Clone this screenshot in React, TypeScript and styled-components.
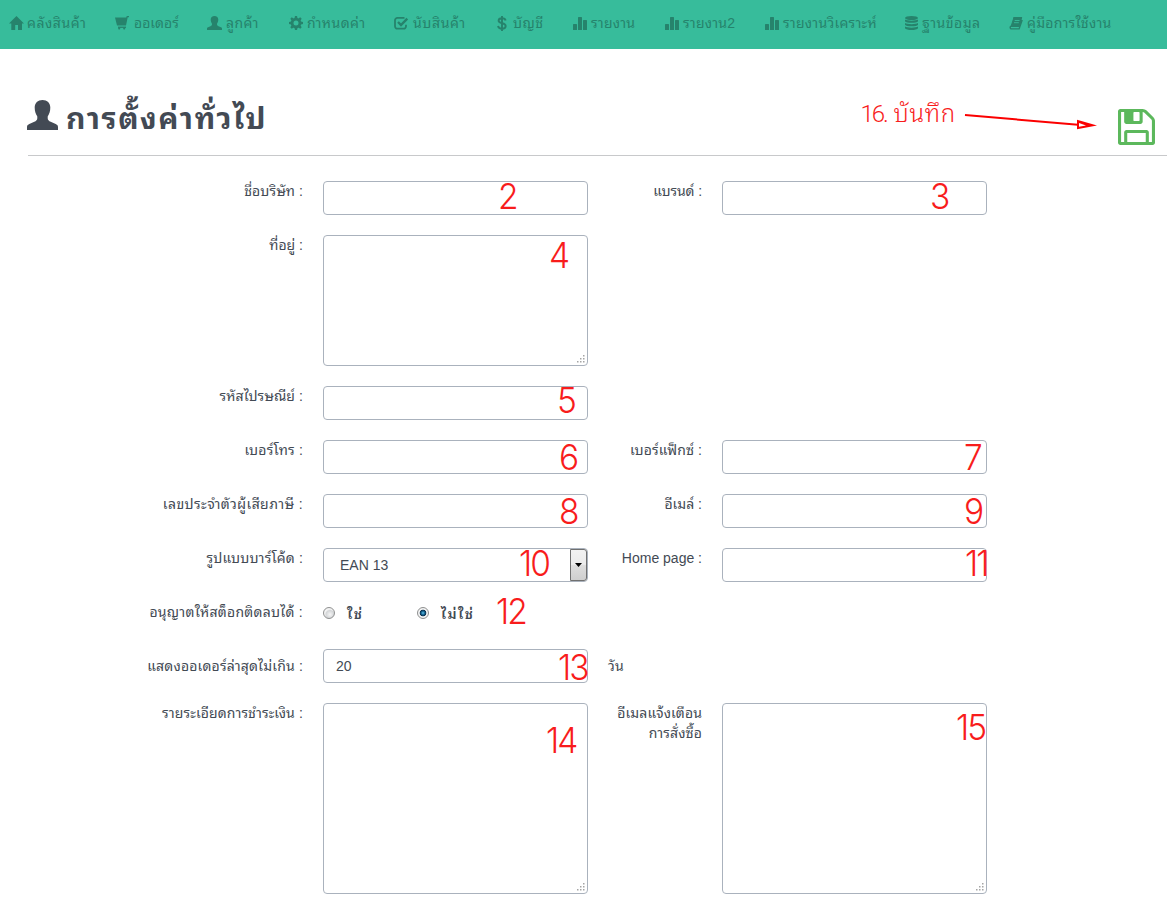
import React from "react";
import styled, { createGlobalStyle } from "styled-components";

const GlobalStyle = createGlobalStyle`
  * { box-sizing: border-box; }
  body {
    margin: 0;
    background: #fff;
    color: #434a54;
    font: 14px/20px "Liberation Sans", "Noto Sans Thai Looped", Loma, Waree, "Noto Sans Thai", "Noto Sans", sans-serif;
    overflow: hidden;
  }
`;

const Navbar = styled.nav`
  display: flex;
  height: 49px;
  padding-left: 9px;
  background: #37bc9b;
  color: #26836c;
`;

const NavItem = styled.a<{ $w: number }>`
  display: flex;
  flex: none;
  align-items: center;
  width: ${(p) => p.$w}px;
  height: 46px;
  white-space: nowrap;
`;

const NavIcon = styled.span<{ $w: number }>`
  display: flex;
  flex: none;
  width: ${(p) => p.$w}px;
  svg { display: block; }
`;

const Label = styled.span<{ $ls?: number }>`
  letter-spacing: ${(p) => p.$ls ?? 0}px;
  white-space: nowrap;
`;

const Header = styled.header`
  display: flex;
  align-items: flex-start;
  height: 107px;
  margin-left: 28px;
  border-bottom: 1px solid #c8c9cb;
`;

const Title = styled.h1`
  display: flex;
  margin: 51px 0 0;
  font-size: 30px;
  line-height: 38px;
  svg { margin-right: 8px; margin-left: -1px; }
`;

const SaveNote = styled.div`
  display: flex;
  margin: 50px 0 0 auto;
  color: #f81c1c;
  font: 300 24px/30px Roboto, "Noto Sans Thai Looped", Loma, Waree, "Noto Sans Thai", sans-serif;
  svg { margin: 13px 0 0 8px; }
`;

const NoteNumber = styled.span`
  width: 33px;
  letter-spacing: -2px;
`;

const SaveButton = styled.button`
  margin: 60px 12px 0 20px;
  padding: 0;
  border: 0;
  background: none;
  color: #5cb85c;
  svg { display: block; }
`;

const Form = styled.form`
  display: flex;
  flex-direction: column;
  gap: 20px;
  padding-top: 25px;
`;

const Row = styled.div<{ $h?: number }>`
  display: grid;
  grid-template-columns: 303px 265px 94px 265px;
  column-gap: 20px;
  height: ${(p) => p.$h ?? 34}px;
`;

const RowLabel = styled.label<{ $top?: number; $ls?: number }>`
  padding-top: ${(p) => p.$top ?? 0}px;
  letter-spacing: ${(p) => p.$ls ?? 0}px;
  text-align: right;
  white-space: nowrap;
`;

const Suffix = styled.span`
  padding-top: 7px;
  letter-spacing: 0.3px;
`;

const Field = styled.div`
  position: relative;
  display: flex;
`;

const Box = styled.div<{ $pad?: number }>`
  display: flex;
  align-items: center;
  flex: 1;
  padding-left: ${(p) => p.$pad ?? 12}px;
  border: 1px solid #aab2bd;
  border-radius: 4px;
`;

const Grip = styled.svg`
  align-self: flex-end;
  margin: 0 2px 2px auto;
`;

const SelectArrow = styled.span`
  display: flex;
  align-items: center;
  justify-content: center;
  width: 17px;
  height: 32px;
  margin-left: auto;
  border: 1px solid #707070;
  border-radius: 0 3px 3px 0;
  background: linear-gradient(#f2f2f2 0%, #ebebeb 48%, #dddddd 52%, #cfcfcf 100%);
`;

const Mark = styled.span<{ $x: number; $y: number }>`
  position: absolute;
  left: ${(p) => p.$x - 1}px;
  top: ${(p) => p.$y - 1}px;
  color: #f81c1c;
  font: 300 36px/26px Inter, sans-serif;
  letter-spacing: -2px;
  transform: scaleX(0.93);
  transform-origin: left;
`;

const Options = styled.div`
  position: relative;
  display: flex;
  align-items: flex-start;
  padding-top: 1px;
`;

const Option = styled.label<{ $w: number }>`
  display: flex;
  align-items: center;
  gap: 12px;
  width: ${(p) => p.$w}px;
  font-weight: 600;
  letter-spacing: 1.4px;
  white-space: nowrap;
`;

const OptionText = styled.span`
  position: relative;
  top: 1px;
`;

const Radio = styled.span<{ $on?: boolean }>`
  flex: none;
  width: 12px;
  height: 12px;
  border: 1px solid #8e8f8f;
  border-radius: 50%;
  background: ${(p) =>
    p.$on
      ? "radial-gradient(circle at 50% 50%, #6cc4ea 0, #1b6f9c 22%, #0b2f4c 42%, #f4f4f4 52%)"
      : "radial-gradient(circle at 60% 65%, #f6f6f6 0, #d4d6d8 45%, #f4f4f4 60%)"};
`;

const HomeIcon = () => (
  <svg width="15" height="14" viewBox="0 0 15 14" fill="currentColor">
    <path d="M7.5 0 15 7.4h-2V14H9V9H6.2v5H2.3V7.4H0L5.2 2.3z" />
  </svg>
);
const CartIcon = () => (
  <svg width="15" height="14" viewBox="0 0 15 14" fill="currentColor">
    <path d="M0 1.500h11.200L11.800 0H14v1.200h-1.300L11 9.600H2z" />
    <path d="M3 10.600h8v1.300H3z" />
    <rect x="3.200" y="11.500" width="2" height="2" rx=".8" /><rect x="8.200" y="11.500" width="2" height="2" rx=".8" />
  </svg>
);
const UserIcon = ({ w = 15, h = 14 }: { w?: number; h?: number }) => (
  <svg width={w} height={h} viewBox="0 0 31 30" preserveAspectRatio="none" fill="currentColor">
    <path d="M15.500 0c4.700 0 7.800 3 7.800 7.500 0 4-1 6.500-2.600 9v1.700c0 1.700 1.200 2.700 3 3.600l5 2.300c1.800.9 2.300 1.600 2.300 3.200V30H0v-2.700c0-1.600.5-2.300 2.300-3.200l5-2.300c1.800-.9 3-1.900 3-3.600v-1.700c-1.600-2.500-2.600-5-2.600-9C7.700 3 10.800 0 15.500 0z" />
  </svg>
);
const CogIcon = () => (
  <svg width="14" height="14" viewBox="-7 -7 14 14">
    <circle r="3.900" fill="none" stroke="currentColor" strokeWidth="2.800" />
    {[0, 45, 90, 135, 180, 225, 270, 315].map((a) => (
      <path key={a} d="M-1.500-4.800-1-7h2l.5 2.200z" transform={`rotate(${a})`} fill="currentColor" />
    ))}
  </svg>
);
const CheckIcon = () => (
  <svg width="15" height="14" viewBox="0 0 15 14" fill="none" stroke="currentColor">
    <path d="M10.500 1.900H3.500A2.400 2.400 0 0 0 1 4.300v6a2.400 2.400 0 0 0 2.500 2.400h6A2.400 2.400 0 0 0 12 10.300V8.800" strokeWidth="1.800" />
    <path d="m4 6 3 3 6.300-6.300" strokeWidth="2.400" />
  </svg>
);
const DollarIcon = () => (
  <svg width="10" height="15" viewBox="0 0 10 15" fill="none" stroke="currentColor">
    <path d="M8.600 4.500C8.300 3 7 2.300 5 2.300S1.600 3.200 1.600 4.800C1.600 8.200 8.700 6.300 8.700 10c0 1.700-1.500 2.700-3.700 2.700S1.400 11.700 1 10M5 0v15" strokeWidth="1.900" />
  </svg>
);
const BarsIcon = () => (
  <svg width="14" height="13" viewBox="0 0 14 13" fill="currentColor">
    <rect x="0" y="7" width="4" height="6" rx=".6" /><rect x="5" y="0" width="4" height="13" rx=".6" /><rect x="10" y="3" width="4" height="10" rx=".6" />
  </svg>
);
const DatabaseIcon = () => (
  <svg width="13" height="14" viewBox="0 0 13 14" fill="currentColor">
    <ellipse cx="6.500" cy="2" rx="6.500" ry="2" />
    <path d="M0 3.500c2 1.500 11 1.500 13 0v1.800c-1 2-12 2-13 0zM0 7c2 1.500 11 1.500 13 0v1.800c-1 2-12 2-13 0zM0 10.500c2 1.500 11 1.500 13 0v1.700c-1 2.400-12 2.400-13 0z" />
  </svg>
);
const BookIcon = () => (
  <svg width="14" height="13" viewBox="0 0 14 13" fill="none" stroke="currentColor">
    <path d="M4.800 1h7.400L9.700 9H2.200z" fill="currentColor" />
    <path d="M4.300.8h8L10 9.300H2.200c-1.400 0-1.400 2.600.3 2.600h7.600L13.200 3" strokeWidth="1.400" />
    <path d="M5.700 3.500h4.800M5 5.700h4.800" stroke="#37bc9b" strokeWidth=".9" />
  </svg>
);
const FloppyIcon = () => (
  <svg width="37" height="36" viewBox="0 128 1536 1536" preserveAspectRatio="none" fill="currentColor">
    <path d="M384 1536h768v-384h-768v384zm896 0h128v-896q0-14-10-38.500t-20-34.500l-281-281q-10-10-34-20t-39-10v416q0 40-28 68t-68 28h-576q-40 0-68-28t-28-68v-416h-128v1280h128v-416q0-40 28-68t68-28h832q40 0 68 28t28 68v416zm-384-928v-320q0-13-9.500-22.500t-22.500-9.500h-192q-13 0-22.500 9.500t-9.500 22.500v320q0 13 9.500 22.500t22.500 9.500h192q13 0 22.500-9.500t9.500-22.500zm640 32v928q0 40-28 68t-68 28h-1344q-40 0-68-28t-28-68v-1344q0-40 28-68t68-28h928q40 0 88 20t76 48l280 280q28 28 48 76t20 88z" />
  </svg>
);
const ArrowIcon = () => (
  <svg width="134" height="18" viewBox="0 0 134 18" fill="#fb0000">
    <path d="m1 3 113 9.800" stroke="#fb0000" strokeWidth="2" />
    <path d="m113 7.700 20 5.800-20 3.800z" />
    <path d="m115 11 7 2.500-7 1.200z" fill="#fff" />
  </svg>
);

const navItems = [
  { icon: <HomeIcon />, iw: 18, w: 106, text: "คลังสินค้า", ls: 0.55 },
  { icon: <CartIcon />, iw: 19, w: 92, text: "ออเดอร์", ls: 0 },
  { icon: <UserIcon />, iw: 19, w: 82, text: "ลูกค้า", ls: 0.4 },
  { icon: <CogIcon />, iw: 18, w: 105, text: "กำหนดค่า", ls: 0.45 },
  { icon: <CheckIcon />, iw: 19, w: 103, text: "นับสินค้า", ls: 0.6 },
  { icon: <DollarIcon />, iw: 16, w: 76, text: "บัญชี", ls: 0.5 },
  { icon: <BarsIcon />, iw: 18, w: 92, text: "รายงาน", ls: 0.2 },
  { icon: <BarsIcon />, iw: 18, w: 100, text: "รายงาน2", ls: 0.2 },
  { icon: <BarsIcon />, iw: 18, w: 140, text: "รายงานวิเคราะห์", ls: 0.25 },
  { icon: <DatabaseIcon />, iw: 17, w: 104, text: "ฐานข้อมูล", ls: 0.5 },
  { icon: <BookIcon />, iw: 18, w: 110, text: "คู่มือการใช้งาน", ls: 0.25 },
];

type InputProps = {
  mark: string;
  x: number;
  y: number;
  value?: string;
  area?: boolean;
  select?: boolean;
};

const Input = ({ mark, x, y, value, area, select }: InputProps) => (
  <Field>
    <Box $pad={select ? 16 : 12}>
      {value}
      {area && (
        <Grip width="8" height="8" fill="#a5a5a5">
          <path d="M6 0h1.500v1.500H6zM3 3h1.500v1.500H3zM6 3h1.500v1.500H6zM0 6h1.500v1.500H0zM3 6h1.500v1.500H3zM6 6h1.500v1.500H6z" />
        </Grip>
      )}
      {select && (
        <SelectArrow>
          <svg width="7" height="4"><path d="M0 0h7L3.500 4z" /></svg>
        </SelectArrow>
      )}
    </Box>
    <Mark $x={x} $y={y}>{mark}</Mark>
  </Field>
);

export default function App() {
  return (
    <>
      <GlobalStyle />
      <Navbar>
        {navItems.map((n) => (
          <NavItem key={n.text} $w={n.w}>
            <NavIcon $w={n.iw}>{n.icon}</NavIcon>
            <Label $ls={n.ls}>{n.text}</Label>
          </NavItem>
        ))}
      </Navbar>
      <Header>
        <Title>
          <UserIcon w={31} h={30} />
          <Label $ls={1.65}>การตั้งค่าทั่วไป</Label>
        </Title>
        <SaveNote>
          <NoteNumber>16.</NoteNumber>
          <Label $ls={0.8}>บันทึก</Label>
          <ArrowIcon />
        </SaveNote>
        <SaveButton aria-label="บันทึก"><FloppyIcon /></SaveButton>
      </Header>
      <Form>
        <Row>
          <RowLabel $ls={0.1}>ชื่อบริษัท :</RowLabel>
          <Input mark="2" x={176} y={3} />
          <RowLabel $ls={-0.1}>แบรนด์ :</RowLabel>
          <Input mark="3" x={209} y={3} />
        </Row>
        <Row $h={131}>
          <RowLabel>ที่อยู่ :</RowLabel>
          <Input area mark="4" x={227} y={8} />
        </Row>
        <Row>
          <RowLabel $ls={0.1}>รหัสไปรษณีย์ :</RowLabel>
          <Input mark="5" x={235} y={2} />
        </Row>
        <Row>
          <RowLabel $ls={0.2}>เบอร์โทร :</RowLabel>
          <Input mark="6" x={237} y={5} />
          <RowLabel $ls={0.1}>เบอร์แฟ็กซ์ :</RowLabel>
          <Input mark="7" x={243} y={5} />
        </Row>
        <Row>
          <RowLabel $ls={0.42}>เลขประจำตัวผู้เสียภาษี :</RowLabel>
          <Input mark="8" x={237} y={5} />
          <RowLabel>อีเมล์ :</RowLabel>
          <Input mark="9" x={243} y={5} />
        </Row>
        <Row>
          <RowLabel $ls={0.15}>รูปแบบบาร์โค้ด :</RowLabel>
          <Input select value="EAN 13" mark="10" x={197} y={3} />
          <RowLabel>Home page :</RowLabel>
          <Input mark="11" x={244} y={3} />
        </Row>
        <Row $h={27}>
          <RowLabel $ls={0.26}>อนุญาตให้สต็อกติดลบได้ :</RowLabel>
          <Options>
            <Option $w={94}><Radio /><OptionText>ใช่</OptionText></Option>
            <Option $w={60}><Radio $on /><OptionText>ไม่ใช่</OptionText></Option>
            <Mark $x={174} $y={-3}>12</Mark>
          </Options>
        </Row>
        <Row>
          <RowLabel $top={7} $ls={0.17}>แสดงออเดอร์ล่าสุดไม่เกิน :</RowLabel>
          <Input value="20" mark="13" x={236} y={6} />
          <Suffix>วัน</Suffix>
        </Row>
        <Row $h={191}>
          <RowLabel $ls={0.12}>รายระเอียดการชำระเงิน :</RowLabel>
          <Input area mark="14" x={224} y={25} />
          <RowLabel $ls={0.1}>อีเมลแจ้งเตือน<br />การสั่งซื้อ</RowLabel>
          <Input area mark="15" x={235} y={12} />
        </Row>
      </Form>
    </>
  );
}
